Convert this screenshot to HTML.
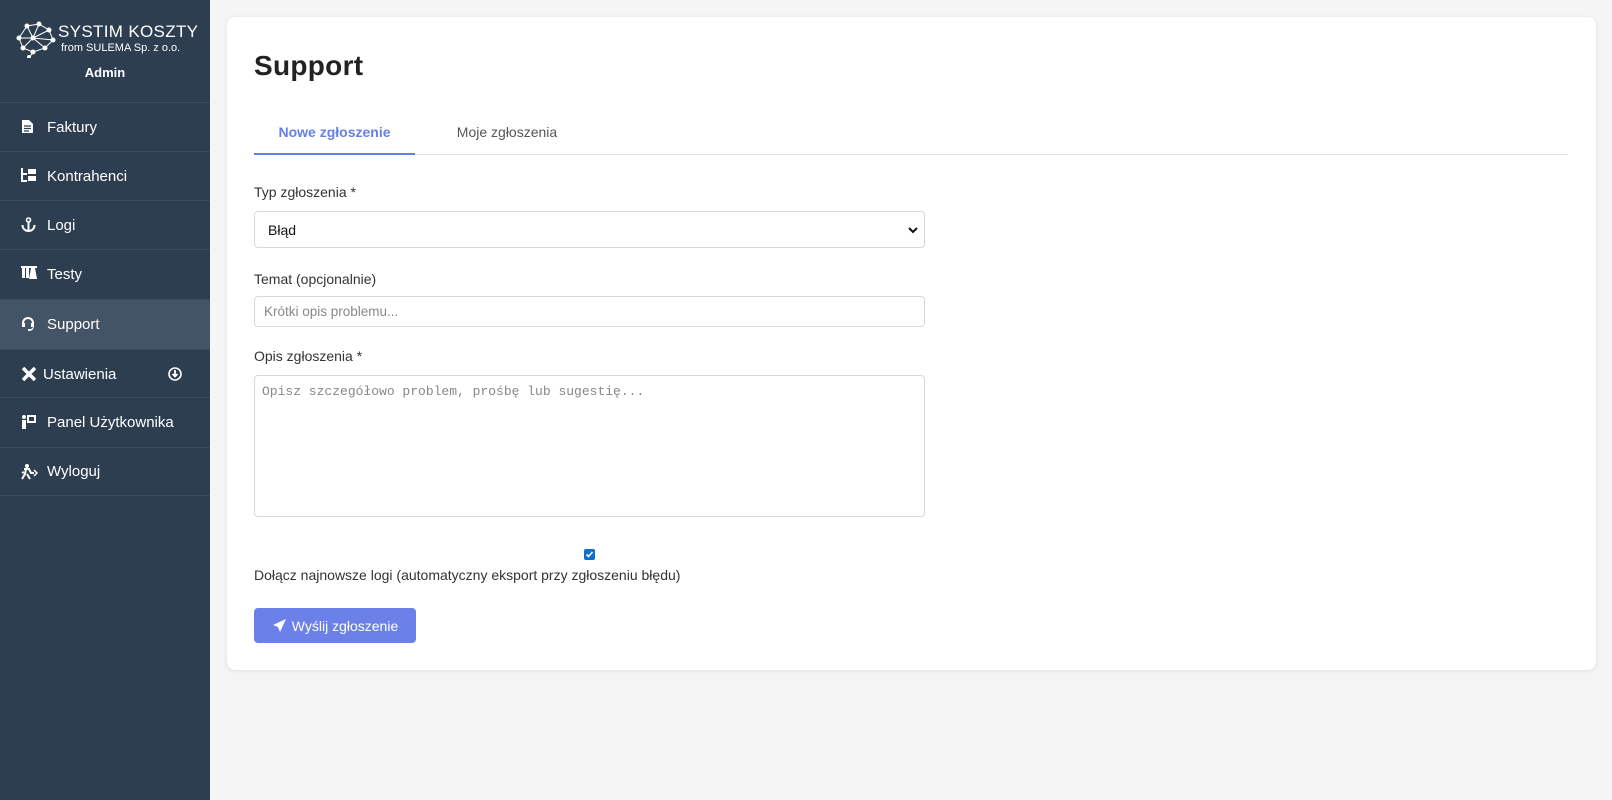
<!DOCTYPE html>
<html><head><meta charset="utf-8"><style>
*{box-sizing:border-box;margin:0;padding:0}
body{width:1612px;height:800px;background:#f5f5f5;font-family:"Liberation Sans",sans-serif;position:relative;overflow:hidden}
.sb{position:absolute;left:0;top:0;width:210px;height:800px;background:#2d3e50;color:#fff}
.logo{position:absolute;left:15px;top:18px;width:185px;height:40px}
.admin{position:absolute;top:65px;width:210px;text-align:center;font-size:13px;font-weight:bold}
.item{position:absolute;left:0;width:210px;height:49px;border-top:1px solid #3b4c5d;font-size:15px;display:flex;align-items:center;padding-left:47px}
.item.act{background:#435466}
.item svg{position:absolute;left:21px;top:16px}
.card{position:absolute;left:227px;top:17px;width:1369px;height:653px;background:#fff;border-radius:8px;box-shadow:0 1px 4px rgba(0,0,0,.1)}
h1{position:absolute;left:27px;top:33px;font-size:28px;font-weight:bold;color:#222;letter-spacing:.3px}
.tabs{position:absolute;left:27px;top:100px;width:1314px;height:38px;border-bottom:1px solid #e0e0e0}
.tab{position:absolute;top:7px;font-size:14px}
.t1{left:0;width:161px;text-align:center;color:#667eea;font-weight:bold;height:31px;border-bottom:2px solid #667eea}
.t2{left:178px;width:150px;text-align:center;color:#555}
.lbl{position:absolute;left:27px;font-size:14px;color:#333}
.f{position:absolute;left:27px;width:671px;border:1px solid #d8d8d8;border-radius:4px;background:#fff;font-size:14px}
.ph{color:#888}
.btn{position:absolute;left:27px;top:591px;width:162px;height:35px;background:#6c80ea;border-radius:4px;color:#fff;font-size:14px;display:flex;align-items:center;justify-content:center;gap:5px}
</style></head><body>
<div class="sb">
<svg class="logo" viewBox="0 0 185 40">
<g stroke="#fff" stroke-width="1" fill="#fff">
<path d="M4 20 L12 8 L24 6 L34 12 L38 22 L30 30 L18 34 L8 30 Z M12 8 L18 20 L30 30 M24 6 L18 20 L8 30 M34 12 L18 20 M4 20 L18 20 L38 22 M18 34 L14 40" fill="none"/>
<circle cx="4" cy="20" r="2"/><circle cx="12" cy="8" r="2"/><circle cx="24" cy="6" r="2"/><circle cx="34" cy="12" r="2"/><circle cx="38" cy="22" r="2"/><circle cx="30" cy="30" r="2"/><circle cx="18" cy="34" r="2"/><circle cx="8" cy="30" r="2"/><circle cx="18" cy="20" r="2"/><circle cx="14" cy="39" r="1.5"/>
</g>
<text x="43" y="19" fill="#fff" font-size="17" font-family="Liberation Sans" textLength="140">SYSTIM KOSZTY</text>
<text x="46" y="33" fill="#fff" font-size="11" font-family="Liberation Sans">from SULEMA Sp. z o.o.</text>
</svg>
<div class="admin">Admin</div>
<div class="item" style="top:102px"><svg width="13" height="15" viewBox="0 0 13 15"><path d="M1 1h7l4 4v9H1z" fill="#fff"/><path d="M3 7h7M3 9.5h7M3 12h5" stroke="#2d3e50" stroke-width="1.2"/></svg>Faktury</div>
<div class="item" style="top:151px"><svg width="16" height="14" viewBox="0 0 16 14"><path d="M1 0v13h5M1 6h5" stroke="#fff" stroke-width="2" fill="none"/><rect x="7" y="1" width="8" height="5" fill="#fff"/><rect x="7" y="8" width="8" height="5" fill="#fff"/></svg>Kontrahenci</div>
<div class="item" style="top:200px"><svg width="15" height="15" viewBox="0 0 15 15"><circle cx="7.5" cy="3" r="2" fill="none" stroke="#fff" stroke-width="1.6"/><path d="M7.5 5v9M1.5 8c0 4 3 6 6 6s6-2 6-6" stroke="#fff" stroke-width="2" fill="none"/></svg>Logi</div>
<div class="item" style="top:249px"><svg width="16" height="14" viewBox="0 0 16 14"><path d="M0 0h16v2H0zM1 2h3v10H1zM5 2h3v10H5zM10 2h4l2 11H8z" fill="#fff"/></svg>Testy</div>
<div class="item act" style="top:299px;height:50px"><svg width="14" height="15" viewBox="0 0 14 15"><path d="M7 1a6 6 0 0 0-6 6v4h3V7H3a4 4 0 0 1 8 0h-1v4h2a3 3 0 0 1-3 2H7v2h2a5 5 0 0 0 4-5V7a6 6 0 0 0-6-6z" fill="#fff"/></svg>Support</div>
<div class="item" style="top:349px;padding-left:43px"><svg width="16" height="16" viewBox="0 0 16 16" style="left:21px"><path d="M2 2l12 12M14 2L2 14" stroke="#fff" stroke-width="3.5"/></svg>Ustawienia<svg width="14" height="14" viewBox="0 0 14 14" style="left:168px;top:17px"><circle cx="7" cy="7" r="6" fill="none" stroke="#fff" stroke-width="1.6"/><path d="M7 3v6M4.5 7L7 9.5 9.5 7" stroke="#fff" stroke-width="1.8" fill="none"/></svg></div>
<div class="item" style="top:397px;height:50px"><svg width="16" height="15" viewBox="0 0 16 15"><circle cx="3" cy="3" r="2" fill="#fff"/><path d="M1 6h4v9H1zM6 1h9v8H6" fill="#fff"/><rect x="8" y="3" width="5" height="4" fill="#2d3e50"/></svg>Panel Użytkownika</div>
<div class="item" style="top:447px;border-bottom:1px solid #3b4c5d"><svg width="17" height="16" viewBox="0 0 17 16"><circle cx="6" cy="2" r="2" fill="#fff"/><path d="M3 5h5l2 4h3M5 5l-1 5-3 5M6 10l3 5M3 8L1 9" stroke="#fff" stroke-width="2" fill="none"/><path d="M13 6l3 3-3 3" stroke="#fff" stroke-width="1.5" fill="none"/></svg>Wyloguj</div>
</div>
<div class="card">
<h1>Support</h1>
<div class="tabs"><div class="tab t1">Nowe zgłoszenie</div><div class="tab t2">Moje zgłoszenia</div></div>
<div class="lbl" style="top:167px">Typ zgłoszenia *</div>
<div class="f" style="top:194px;height:37px;padding:10px 0 0 13px;color:#111">Błąd<svg width="10" height="8" viewBox="0 0 10 8" style="position:absolute;right:6px;top:14px"><path d="M1 2l4 4 4-4" stroke="#111" stroke-width="2" fill="none"/></svg></div>
<div class="lbl" style="top:254px">Temat (opcjonalnie)</div>
<div class="f ph" style="top:279px;height:31px;padding:7px 0 0 9px;font-size:13.5px">Krótki opis problemu...</div>
<div class="lbl" style="top:331px">Opis zgłoszenia *</div>
<div class="f ph" style="top:358px;height:142px;padding:8px 0 0 7px;font-family:'Liberation Mono',monospace;font-size:13px">Opisz szczegółowo problem, prośbę lub sugestię...</div>
<div style="position:absolute;left:357px;top:532px;width:11px;height:11px;background:#0f6fd0;border-radius:2px"><svg width="11" height="11" viewBox="0 0 11 11" style="position:absolute;left:0;top:0"><path d="M2.5 5.5l2 2 4-4.5" stroke="#fff" stroke-width="1.6" fill="none"/></svg></div>
<div class="lbl" style="top:550px">Dołącz najnowsze logi (automatyczny eksport przy zgłoszeniu błędu)</div>
<div class="btn"><svg width="15" height="15" viewBox="0 0 15 15"><path d="M14 1L1 7l5 2 2 5z" fill="#fff"/></svg>Wyślij zgłoszenie</div>
</div>
</body></html>
